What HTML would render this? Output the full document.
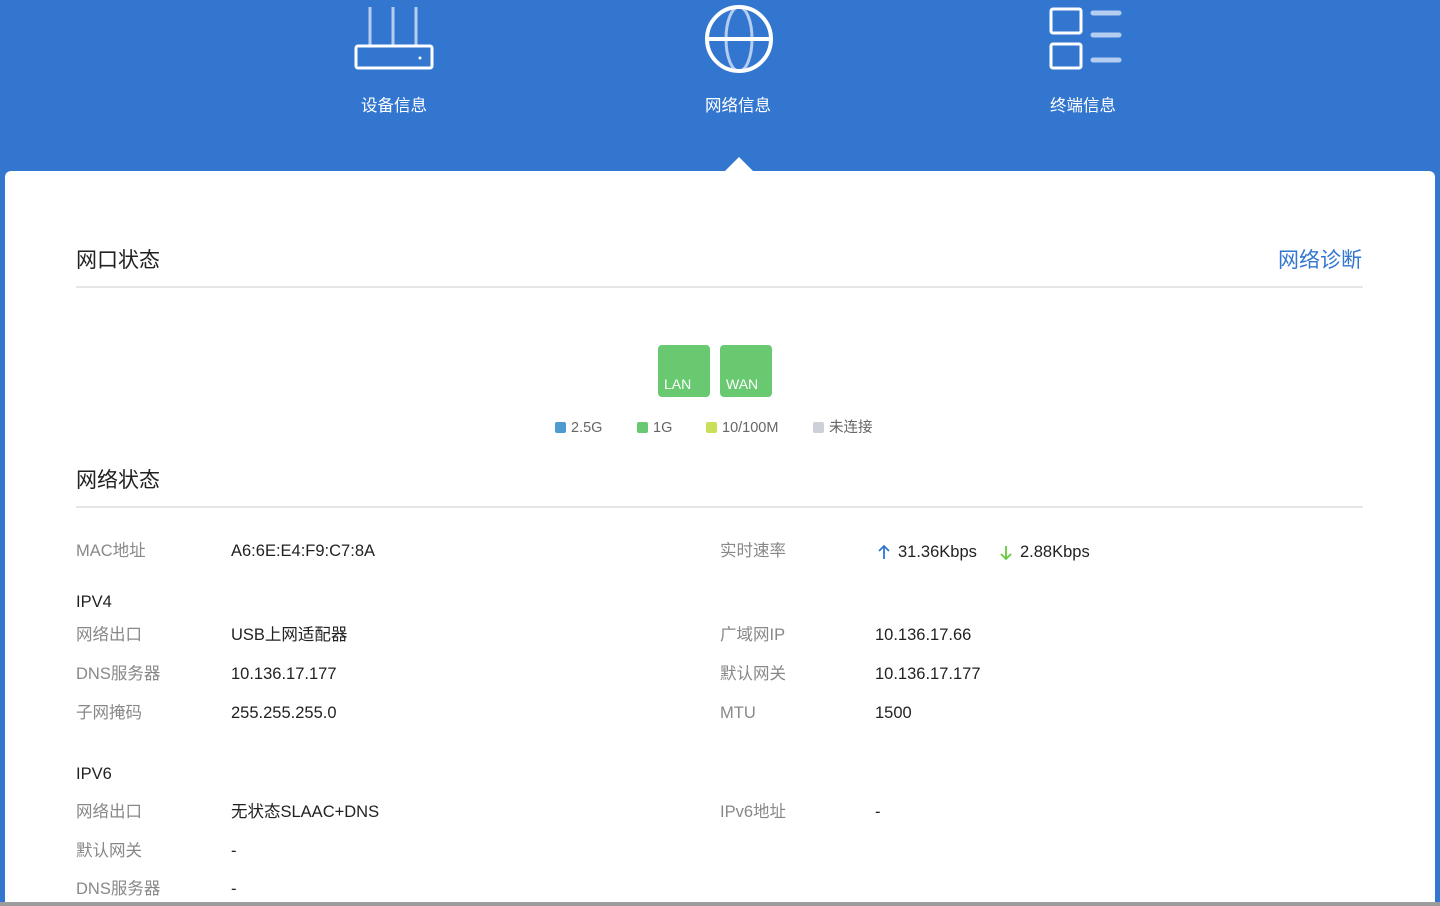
<!DOCTYPE html>
<html><head><meta charset="utf-8"><style>
*{margin:0;padding:0;box-sizing:border-box}
body{width:1440px;height:906px;overflow:hidden;background:#3376d0;font-family:"Liberation Sans","Noto Sans CJK SC",sans-serif;position:relative}
div{line-height:20px}
.nav{position:absolute;color:#fff;font-size:16.5px;text-align:center}
.card{position:absolute;left:5px;top:171px;width:1430px;height:731px;background:#fff;border-radius:6px 6px 0 0}
.tri{position:absolute;left:725px;top:157px;width:0;height:0;border-left:14px solid transparent;border-right:14px solid transparent;border-bottom:14px solid #fff}
.strip{position:absolute;left:0;top:902px;width:1440px;height:4px;background:#9d9d9d}
.t{position:absolute;font-size:21px;color:#222;line-height:24px}
.hr{position:absolute;left:76px;width:1287px;height:2px;background:#e6e6e6}
.l{position:absolute;font-size:16.5px;color:#888}
.v{position:absolute;font-size:16.5px;color:#222}
.port{position:absolute;top:345px;width:52px;height:52px;background:#68c970;border-radius:4px;color:#fff;font-size:14px;padding:29px 0 0 6px}
.lg{position:absolute;top:418px;font-size:14.5px;color:#666}
.lg i{display:inline-block;width:11px;height:11px;border-radius:2px;margin-right:5px;vertical-align:-1px}
</style></head><body>
<svg style="position:absolute;left:354px;top:5px" width="80" height="66" viewBox="0 0 80 66" fill="none" stroke="#fff" stroke-width="3">
<path d="M16 2v38M39 2v38M62 2v38" stroke="#b5cdf0"/><rect x="2" y="41" width="76" height="22" rx="2"/><circle cx="66" cy="53" r="1.5" fill="#fff" stroke="none"/></svg>
<svg style="position:absolute;left:703px;top:3px" width="72" height="72" viewBox="0 0 72 72" fill="none" stroke="#fff" stroke-width="4">
<ellipse cx="36" cy="36" rx="13" ry="32" stroke="#b5cdf0" stroke-width="3"/><circle cx="36" cy="36" r="32"/><path d="M4 36h64"/></svg>
<svg style="position:absolute;left:1049px;top:7px" width="74" height="64" viewBox="0 0 74 64" fill="none" stroke="#fff" stroke-width="3">
<rect x="2" y="2" width="30" height="24" rx="2"/><rect x="2" y="37" width="30" height="24" rx="2"/>
<path d="M44 6h26M44 28h26M44 53h26" stroke="#b5cdf0" stroke-width="5" stroke-linecap="round"/></svg>
<div class="nav" style="left:361px;top:96px">设备信息</div>
<div class="nav" style="left:705px;top:96px">网络信息</div>
<div class="nav" style="left:1050px;top:96px">终端信息</div>
<div class="tri"></div>
<div class="card"></div>
<div class="strip"></div>
<div class="t" style="left:76px;top:249px">网口状态</div>
<div class="t" style="left:1278px;top:249px;color:#3376d0">网络诊断</div>
<div class="hr" style="top:286px"></div>
<div class="port" style="left:658px">LAN</div>
<div class="port" style="left:720px">WAN</div>
<div class="lg" style="left:555px"><i style="background:#4d9bd0"></i>2.5G</div>
<div class="lg" style="left:637px"><i style="background:#68c970"></i>1G</div>
<div class="lg" style="left:706px"><i style="background:#c9df5a"></i>10/100M</div>
<div class="lg" style="left:813px"><i style="background:#cdd0d6"></i>未连接</div>
<div class="t" style="left:76px;top:469px">网络状态</div>
<div class="hr" style="top:506px"></div>
<div class="l" style="left:76px;top:541px">MAC地址</div><div class="v" style="left:231px;top:541px">A6:6E:E4:F9:C7:8A</div>
<div class="l" style="left:720px;top:541px">实时速率</div>
<svg style="position:absolute;left:877px;top:544px" width="14" height="16" viewBox="0 0 14 16" fill="none" stroke="#3376d0" stroke-width="1.8"><path d="M7 15V2M2 7l5-5 5 5"/></svg>
<div class="v" style="left:898px;top:542px">31.36Kbps</div>
<svg style="position:absolute;left:999px;top:545px" width="14" height="16" viewBox="0 0 14 16" fill="none" stroke="#68c940" stroke-width="1.8"><path d="M7 1v13M2 9l5 5 5-5"/></svg>
<div class="v" style="left:1020px;top:542px">2.88Kbps</div>
<div class="v" style="left:76px;top:592px">IPV4</div>
<div class="l" style="left:76px;top:625px">网络出口</div><div class="v" style="left:231px;top:625px">USB上网适配器</div>
<div class="l" style="left:720px;top:625px">广域网IP</div><div class="v" style="left:875px;top:625px">10.136.17.66</div>
<div class="l" style="left:76px;top:664px">DNS服务器</div><div class="v" style="left:231px;top:664px">10.136.17.177</div>
<div class="l" style="left:720px;top:664px">默认网关</div><div class="v" style="left:875px;top:664px">10.136.17.177</div>
<div class="l" style="left:76px;top:703px">子网掩码</div><div class="v" style="left:231px;top:703px">255.255.255.0</div>
<div class="l" style="left:720px;top:703px">MTU</div><div class="v" style="left:875px;top:703px">1500</div>
<div class="v" style="left:76px;top:764px">IPV6</div>
<div class="l" style="left:76px;top:802px">网络出口</div><div class="v" style="left:231px;top:802px">无状态SLAAC+DNS</div>
<div class="l" style="left:720px;top:802px">IPv6地址</div><div class="v" style="left:875px;top:802px">-</div>
<div class="l" style="left:76px;top:841px">默认网关</div><div class="v" style="left:231px;top:841px">-</div>
<div class="l" style="left:76px;top:879px">DNS服务器</div><div class="v" style="left:231px;top:879px">-</div>
</body></html>
